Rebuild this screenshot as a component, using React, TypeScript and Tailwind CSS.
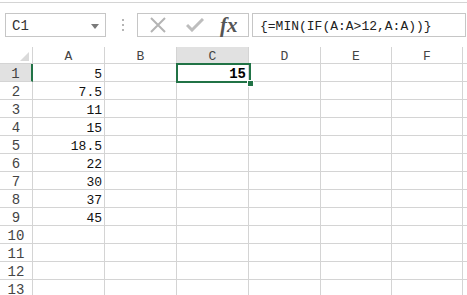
const cols = ['A', 'B', 'C', 'D', 'E', 'F'];
const widths = ['w-[72px]', 'w-[72px]', 'w-[72px]', 'w-[72px]', 'w-[71px]', 'w-[71px]'];
const values = ['5', '7.5', '11', '15', '18.5', '22', '30', '37', '45', '', '', '', ''];

const cellFont = { fontFamily: '"Liberation Mono", "DejaVu Sans Mono", monospace' };

const Toolbar = () => (
    <div className="mt-[2px] h-[45px] border-t border-[#d4d4d4] flex items-start pt-[10px]">
        {/* Name box */}
        <div className="ml-[5px] w-[101px] h-[24px] border border-[#c6c6c6] flex items-center justify-between pl-[6px] pr-[6px] pt-[2px]">
            <span className="text-[14px] text-[#333]" style={cellFont}>C1</span>
            <svg width="8" height="5" viewBox="0 0 8 5"><path d="M0 0 L8 0 L4 5 Z" fill="#7a7a7a" /></svg>
        </div>

        {/* Grip dots */}
        <div className="ml-[15px] w-[3px] h-[24px] flex flex-col items-center justify-center gap-[3px]">
            <span className="w-[2px] h-[2px] bg-[#b5b5b5]" />
            <span className="w-[2px] h-[2px] bg-[#b5b5b5]" />
            <span className="w-[2px] h-[2px] bg-[#b5b5b5]" />
        </div>

        {/* Cancel / enter / fx */}
        <div className="ml-[13px] w-[112px] h-[24px] border border-[#c6c6c6] flex items-center">
            <svg className="ml-[11px]" width="18" height="16" viewBox="0 0 18 16">
                <path d="M2 1 L16 15 M16 1 L2 15" stroke="#b4b4b4" strokeWidth="2" fill="none" />
            </svg>
            <svg className="ml-[19px]" width="18" height="14" viewBox="0 0 18 14">
                <path d="M1 7 L6 12 L17 1" stroke="#bdbdbd" strokeWidth="3" fill="none" />
            </svg>
            <span className="ml-[16px] text-[21px] italic font-bold leading-none text-[#555]" style={{ fontFamily: '"Liberation Serif", "DejaVu Serif", serif' }}>fx</span>
        </div>

        {/* Formula bar */}
        <div className="ml-[3px] w-[214px] h-[24px] border border-[#c6c6c6] flex items-center pl-[7px] pt-[4px]">
            <span className="text-[13px] text-[#222] whitespace-nowrap" style={cellFont}>{'{=MIN(IF(A:A>12,A:A))}'}</span>
        </div>
    </div>
);

const Grid = () => (
    <div className="relative">
        {/* header row */}
        <div className="flex h-[17px]">
            <div className="w-[33px] border-r border-b border-[#d4d4d4] flex items-end justify-end pr-[3px] pb-[2px]">
                <svg width="9" height="9" viewBox="0 0 9 9"><path d="M9 0 L9 9 L0 9 Z" fill="#dadada" /></svg>
            </div>
            {cols.map((c, i) => (
                <div
                    key={c}
                    className={`${widths[i]} border-r border-b border-[#d4d4d4] flex items-center justify-center pt-[4px] text-[13px] text-[#444] ${c === 'C' ? 'bg-[#e1e1e1]' : ''}`}
                    style={cellFont}>
                    {c}
                </div>
            ))}
            <div className="flex-1 border-b border-[#d4d4d4]" />
        </div>

        {/* body rows */}
        {values.map((v, r) => (
            <div key={r} className="flex h-[18px]">
                <div
                    className={`w-[33px] border-b border-[#d4d4d4] flex items-center justify-center pt-[4px] text-[14px] text-[#444] ${r === 0 ? 'bg-[#e1e1e1] border-r-2 border-r-[#217346]' : 'border-r'}`}
                    style={cellFont}>
                    {r + 1}
                </div>
                {cols.map((c, i) => (
                    <div
                        key={c}
                        className={`${widths[i]} border-r border-b border-[#d4d4d4] flex items-center justify-end pr-[2px] pt-[4px] text-[13px] text-[#111]`}
                        style={cellFont}>
                        {c === 'A' ? v : ''}
                    </div>
                ))}
                <div className="flex-1 border-b border-[#d4d4d4]" />
            </div>
        ))}

        {/* active cell C1 */}
        <div className="absolute left-[176px] top-[16px] w-[75px] h-[20px] border-2 border-[#217346] flex items-center justify-end pr-[3px] pt-[3px]">
            <span className="text-[14px] font-bold text-black" style={cellFont}>15</span>
        </div>
        <div className="absolute left-[247px] top-[33px] w-[5px] h-[5px] bg-[#217346] border border-white box-content" />
    </div>
);

export default function App() {
    return (
        <div className="w-[467px] h-[295px] overflow-hidden bg-white">
            <Toolbar />
            <Grid />
        </div>
    );
}
